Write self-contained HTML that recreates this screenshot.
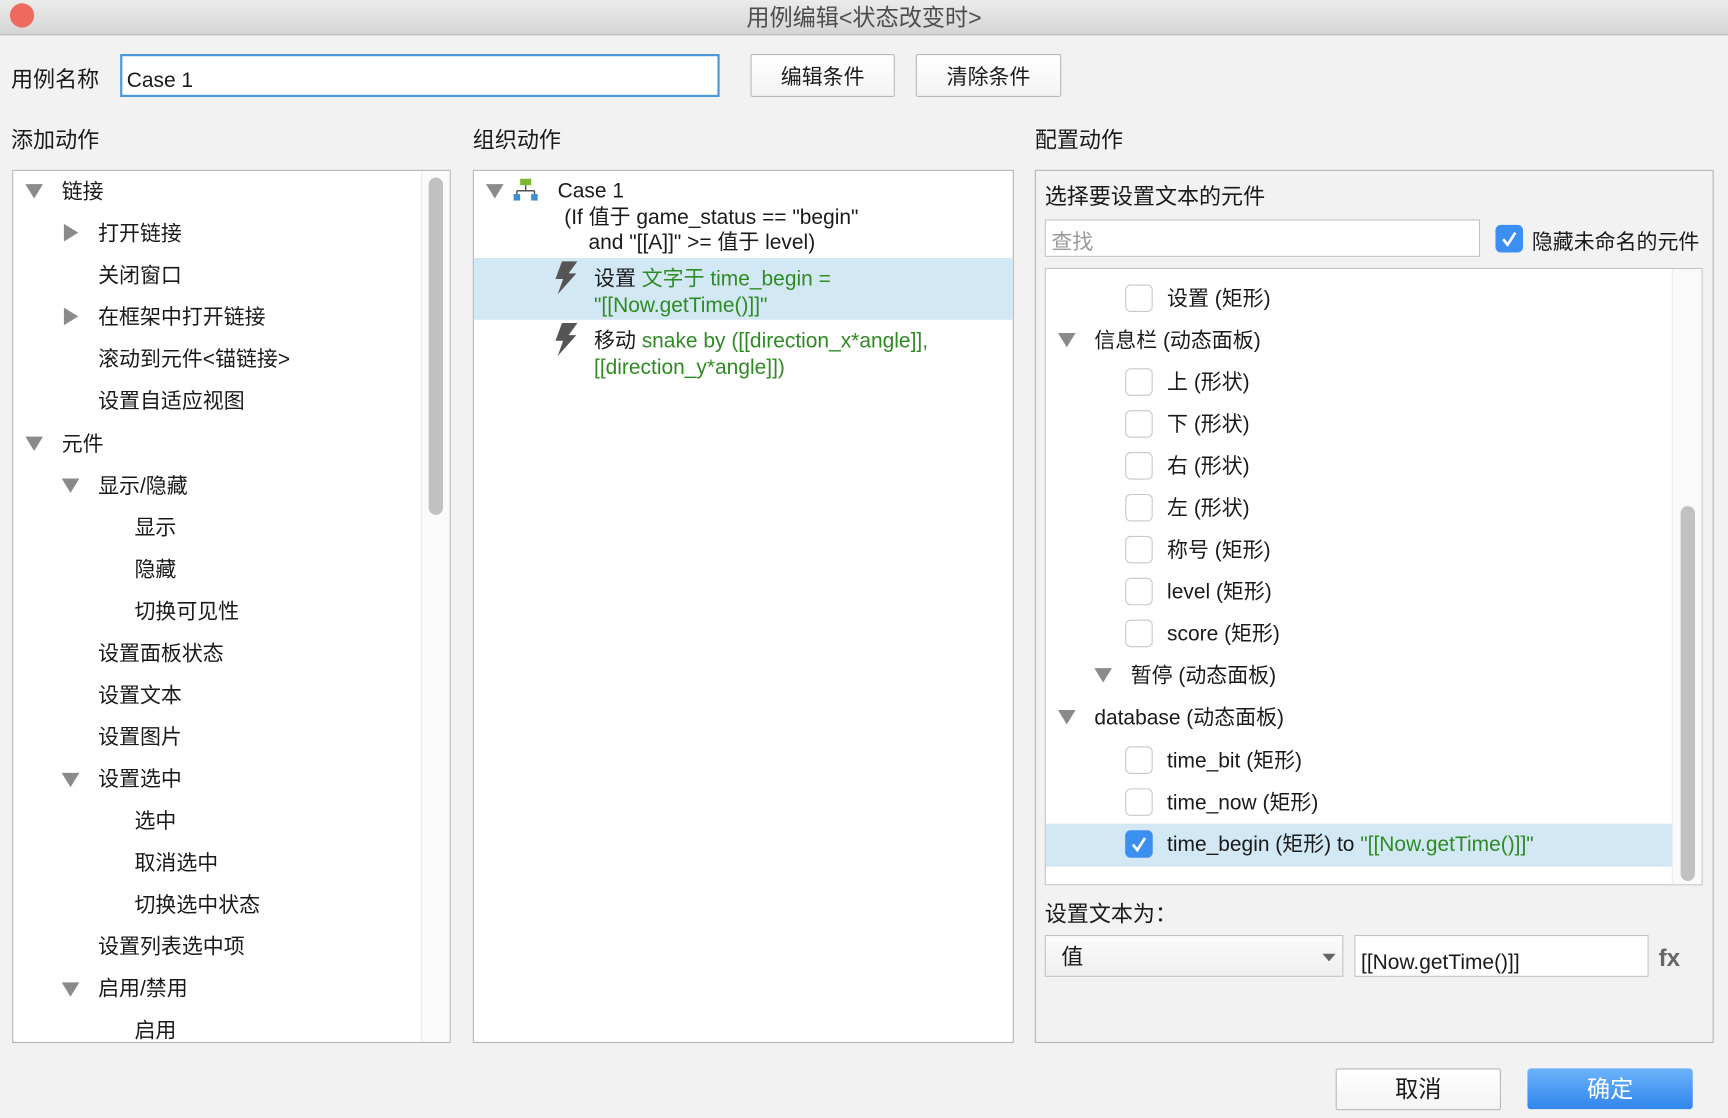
<!DOCTYPE html>
<html><head><meta charset="utf-8"><style>
html,body{margin:0;padding:0;width:1728px;height:1118px;overflow:hidden;background:#f2f2f2}
#w{position:absolute;left:0;top:0;width:1568px;height:1014px;transform:scale(1.10204,1.10256);transform-origin:0 0;font-family:"Liberation Sans","Noto Sans CJK SC",sans-serif;color:#1a1a1a;font-size:19px}
.a{position:absolute;white-space:nowrap}
.t{position:absolute;white-space:nowrap;line-height:24px;margin-top:2px}
.g{color:#2e8b22}
.tri{position:absolute;width:0;height:0;border-left:8px solid transparent;border-right:8px solid transparent;border-top:13px solid #8a8a8a}
.trr{position:absolute;width:0;height:0;border-top:8px solid transparent;border-bottom:8px solid transparent;border-left:13px solid #8a8a8a}
.cb{position:absolute;width:23px;height:23px;border:1px solid #c8c8c8;border-radius:5px;background:#fff}
.cbc{position:absolute;width:25px;height:25px;border-radius:5px;background:#3b8ff0}
.btn{position:absolute;border:1px solid #b9b9b9;background:linear-gradient(#fff,#f4f4f4);border-radius:2px;text-align:center;line-height:41px}
</style></head><body><div id="w">
<div class="a" style="left:0;top:0;width:1568px;height:31px;background:linear-gradient(#ebebeb,#d5d5d5);border-bottom:1px solid #b4b4b4"></div>
<div class="a" style="left:9px;top:3px;width:22px;height:22px;border-radius:50%;background:#ee6a5f"></div>
<div class="a" style="left:0;width:1568px;top:0px;text-align:center;font-size:21px;color:#4d4d4d">用例编辑&lt;状态改变时&gt;</div>

<div class="t" style="left:10px;top:59px;font-size:20px">用例名称</div>
<div class="a" style="left:109px;top:49px;width:540px;height:35px;border:2px solid #4a97dc;background:#fff"></div>
<div class="t" style="left:115px;top:60px">Case 1</div>
<div class="btn" style="left:681px;top:49px;width:129px;height:37px">编辑条件</div>
<div class="btn" style="left:831px;top:49px;width:130px;height:37px">清除条件</div>

<div class="t" style="left:10px;top:114px;font-size:20px">添加动作</div>
<div class="t" style="left:429px;top:114px;font-size:20px">组织动作</div>
<div class="t" style="left:939px;top:114px;font-size:20px">配置动作</div>

<!-- left panel -->
<div class="a" style="left:11px;top:154px;width:396px;height:790px;background:#fff;border:1px solid #b5b5b5;overflow:hidden">
 <div class="a" style="left:370px;top:0;width:26px;height:790px;background:#fafafa;border-left:1px solid #ececec"></div>
 <div class="a" style="left:377px;top:6px;width:13px;height:306px;border-radius:7px;background:#c1c1c1"></div>
</div>
<div class="tri" style="left:23px;top:167px"></div><div class="t" style="left:56px;top:161px">链接</div>
<div class="trr" style="left:58px;top:203px"></div><div class="t" style="left:89px;top:199px">打开链接</div>
<div class="t" style="left:89px;top:237px">关闭窗口</div>
<div class="trr" style="left:58px;top:279px"></div><div class="t" style="left:89px;top:275px">在框架中打开链接</div>
<div class="t" style="left:89px;top:313px">滚动到元件&lt;锚链接&gt;</div>
<div class="t" style="left:89px;top:351px">设置自适应视图</div>
<div class="tri" style="left:23px;top:396px"></div><div class="t" style="left:56px;top:390px">元件</div>
<div class="tri" style="left:56px;top:434px"></div><div class="t" style="left:89px;top:428px">显示/隐藏</div>
<div class="t" style="left:122px;top:466px">显示</div>
<div class="t" style="left:122px;top:504px">隐藏</div>
<div class="t" style="left:122px;top:542px">切换可见性</div>
<div class="t" style="left:89px;top:580px">设置面板状态</div>
<div class="t" style="left:89px;top:618px">设置文本</div>
<div class="t" style="left:89px;top:656px">设置图片</div>
<div class="tri" style="left:56px;top:701px"></div><div class="t" style="left:89px;top:694px">设置选中</div>
<div class="t" style="left:122px;top:732px">选中</div>
<div class="t" style="left:122px;top:770px">取消选中</div>
<div class="t" style="left:122px;top:808px">切换选中状态</div>
<div class="t" style="left:89px;top:846px">设置列表选中项</div>
<div class="tri" style="left:56px;top:891px"></div><div class="t" style="left:89px;top:884px">启用/禁用</div>
<div class="a" style="left:122px;top:922px;height:22px;overflow:hidden;line-height:28px">启用</div>

<!-- middle panel -->
<div class="a" style="left:429px;top:154px;width:489px;height:790px;background:#fff;border:1px solid #b5b5b5"></div>
<div class="a" style="left:430px;top:234px;width:489px;height:56px;background:#d3e8f5"></div>
<div class="tri" style="left:441px;top:167px"></div>
<svg class="a" style="left:466px;top:162px" width="22" height="20"><rect x="6" y="0" width="10" height="6" fill="#7cba2f"/><path d="M11 6v5M3 11h16M3 11v4M19 11v4" stroke="#555" stroke-width="1.3" fill="none"/><rect x="0" y="14" width="6" height="6" fill="#3a8fd0"/><rect x="16" y="14" width="6" height="6" fill="#3a8fd0"/></svg>
<div class="t" style="left:506px;top:160px">Case 1</div>
<div class="t" style="left:512px;top:184px">(If 值于 game_status == "begin"</div>
<div class="t" style="left:534px;top:207px">and "[[A]]" &gt;= 值于 level)</div>
<svg class="a" style="left:500px;top:237px" width="26" height="30"><path d="M10 0h14l-8 11h7L6 30l5-14H4z" fill="#555"/></svg>
<div class="t" style="left:539px;top:240px">设置 <span class="g">文字于 time_begin =</span></div>
<div class="t g" style="left:539px;top:264px">"[[Now.getTime()]]"</div>
<svg class="a" style="left:500px;top:293px" width="26" height="30"><path d="M10 0h14l-8 11h7L6 30l5-14H4z" fill="#555"/></svg>
<div class="t" style="left:539px;top:296px">移动 <span class="g">snake by ([[direction_x*angle]],</span></div>
<div class="t g" style="left:539px;top:320px">[[direction_y*angle]])</div>

<!-- right panel -->
<div class="a" style="left:939px;top:154px;width:614px;height:790px;background:#f2f2f2;border:1px solid #b5b5b5"></div>
<div class="t" style="left:948px;top:165px;font-size:20px">选择要设置文本的元件</div>
<div class="a" style="left:948px;top:199px;width:393px;height:32px;border:1px solid #c3c3c3;background:#fff"></div>
<div class="t" style="left:954px;top:207px;color:#9a9a9a">查找</div>
<div class="cbc" style="left:1357px;top:204px"></div>
<svg class="a" style="left:1357px;top:204px" width="25" height="25"><path d="M7 13l4 5 7-11" stroke="#fff" stroke-width="2.4" fill="none"/></svg>
<div class="t" style="left:1390px;top:207px">隐藏未命名的元件</div>

<div class="a" style="left:948px;top:243px;width:595px;height:558px;background:#fff;border:1px solid #c3c3c3;overflow:hidden">
 <div class="a" style="left:568px;top:0;width:27px;height:558px;background:#fafafa;border-left:1px solid #ececec"></div>
 <div class="a" style="left:576px;top:215px;width:13px;height:340px;border-radius:7px;background:#c1c1c1"></div>
 <div class="a" style="left:0;top:503px;width:568px;height:39px;background:#d3e8f5"></div>
</div>
<div class="cb" style="left:1021px;top:258px"></div><div class="t" style="left:1059px;top:258px">设置 (矩形)</div>
<div class="tri" style="left:960px;top:302px"></div><div class="t" style="left:993px;top:296px">信息栏 (动态面板)</div>
<div class="cb" style="left:1021px;top:334px"></div><div class="t" style="left:1059px;top:334px">上 (形状)</div>
<div class="cb" style="left:1021px;top:372px"></div><div class="t" style="left:1059px;top:372px">下 (形状)</div>
<div class="cb" style="left:1021px;top:410px"></div><div class="t" style="left:1059px;top:410px">右 (形状)</div>
<div class="cb" style="left:1021px;top:448px"></div><div class="t" style="left:1059px;top:448px">左 (形状)</div>
<div class="cb" style="left:1021px;top:486px"></div><div class="t" style="left:1059px;top:486px">称号 (矩形)</div>
<div class="cb" style="left:1021px;top:524px"></div><div class="t" style="left:1059px;top:524px">level (矩形)</div>
<div class="cb" style="left:1021px;top:562px"></div><div class="t" style="left:1059px;top:562px">score (矩形)</div>
<div class="tri" style="left:993px;top:606px"></div><div class="t" style="left:1026px;top:600px">暂停 (动态面板)</div>
<div class="tri" style="left:960px;top:644px"></div><div class="t" style="left:993px;top:638px">database (动态面板)</div>
<div class="cb" style="left:1021px;top:677px"></div><div class="t" style="left:1059px;top:677px">time_bit (矩形)</div>
<div class="cb" style="left:1021px;top:715px"></div><div class="t" style="left:1059px;top:715px">time_now (矩形)</div>
<div class="cbc" style="left:1021px;top:753px"></div>
<svg class="a" style="left:1021px;top:753px" width="25" height="25"><path d="M7 13l4 5 7-11" stroke="#fff" stroke-width="2.4" fill="none"/></svg>
<div class="t" style="left:1059px;top:753px">time_begin (矩形) to <span class="g">"[[Now.getTime()]]"</span></div>

<div class="t" style="left:948px;top:816px;font-size:20px">设置文本为：</div>
<div class="a" style="left:948px;top:848px;width:269px;height:36px;border:1px solid #c3c3c3;background:linear-gradient(#fbfbfb,#efefef)"></div>
<div class="t" style="left:963px;top:855px;font-size:20px">值</div>
<div class="a" style="left:1200px;top:865px;width:0;height:0;border-left:6px solid transparent;border-right:6px solid transparent;border-top:7px solid #666"></div>
<div class="a" style="left:1229px;top:848px;width:265px;height:36px;border:1px solid #c3c3c3;background:#fff"></div>
<div class="t" style="left:1235px;top:860px">[[Now.getTime()]]</div>
<div class="t" style="left:1505px;top:855px;font-size:22px;font-weight:bold;color:#666">fx</div>

<div class="btn" style="left:1212px;top:969px;width:148px;height:36px;font-size:21px;line-height:38px">取消</div>
<div class="a" style="left:1386px;top:969px;width:150px;height:37px;border-radius:3px;background:linear-gradient(#6cb3fa,#2f86ee);color:#fff;text-align:center;line-height:39px;font-size:21px">确定</div>
</div></body></html>
